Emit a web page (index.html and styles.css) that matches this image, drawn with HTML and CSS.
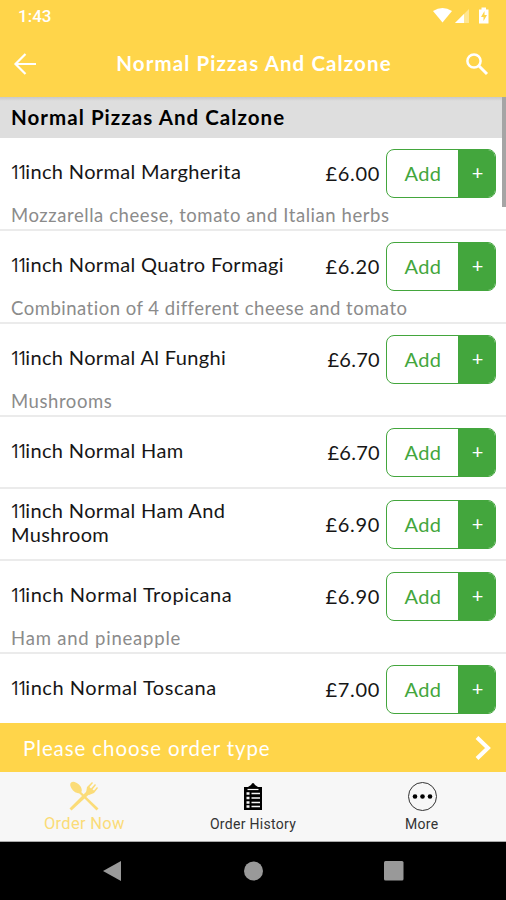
FILE: index.html
```html
<!DOCTYPE html>
<html lang="en">
<head>
<meta charset="utf-8">
<title>Order Now</title>
<link rel="stylesheet" href="styles.css">
</head>
<body>
<div class="phone">
  <header class="top">
    <div class="status">
      <span class="clock">1:43</span>
      <svg class="status-icons" width="58" height="18" viewBox="0 0 58 18">
        <path d="M0 4Q9.500 -2 19 4L9.500 15.500Z" fill="#fff"/>
        <path d="M22 16L36 2V16Z" fill="#fff" opacity=".4"/>
        <path d="M22 16L31 7V16Z" fill="#fff"/>
        <path d="M46 2.500H48.500V0.500H53V2.500H55.500V16.500H46Z" fill="#fff"/>
        <path d="M51.500 4L48 10H50.500V14L54 8H51.500Z" fill="#ffd54a"/>
      </svg>
    </div>
    <div class="bar">
      <svg width="24" height="24" viewBox="0 0 24 24" fill="none" stroke="#fff" stroke-width="2.200"><path d="M23 12H3M12.500 2L2.500 12L12.500 22"/></svg>
      <h1 class="title">Normal Pizzas And Calzone</h1>
      <svg width="24" height="24" viewBox="0 0 24 24" fill="none" stroke="#fff" stroke-width="2.500"><circle cx="9" cy="9" r="6.600"/><path d="M14 14L22 22" stroke-width="3"/></svg>
    </div>
  </header>
  <main class="menu">
    <h2 class="section">Normal Pizzas And Calzone</h2>
    <article class="item">
      <div class="line"><h3 class="name"><span class="ones">11</span>inch Normal Margherita</h3><span class="price">£6.00</span><button class="add"><span class="label">Add</span><span class="plus">+</span></button></div>
      <p class="desc">Mozzarella cheese, tomato and Italian herbs</p>
    </article>
    <article class="item">
      <div class="line"><h3 class="name"><span class="ones">11</span>inch Normal Quatro Formagi</h3><span class="price">£6.20</span><button class="add"><span class="label">Add</span><span class="plus">+</span></button></div>
      <p class="desc tight">Combination of 4 different cheese and tomato</p>
    </article>
    <article class="item">
      <div class="line"><h3 class="name"><span class="ones">11</span>inch Normal Al Funghi</h3><span class="price narrow">£6.70</span><button class="add"><span class="label">Add</span><span class="plus">+</span></button></div>
      <p class="desc">Mushrooms</p>
    </article>
    <article class="item short">
      <div class="line"><h3 class="name"><span class="ones">11</span>inch Normal Ham</h3><span class="price narrow">£6.70</span><button class="add"><span class="label">Add</span><span class="plus">+</span></button></div>
    </article>
    <article class="item short">
      <div class="line"><h3 class="name"><span class="ones">11</span>inch Normal Ham And<br>Mushroom</h3><span class="price">£6.90</span><button class="add"><span class="label">Add</span><span class="plus">+</span></button></div>
    </article>
    <article class="item low">
      <div class="line"><h3 class="name"><span class="ones">11</span>inch Normal Tropicana</h3><span class="price">£6.90</span><button class="add"><span class="label">Add</span><span class="plus">+</span></button></div>
      <p class="desc loose">Ham and pineapple</p>
    </article>
    <article class="item low">
      <div class="line"><h3 class="name"><span class="ones">11</span>inch Normal Toscana</h3><span class="price">£7.00</span><button class="add"><span class="label">Add</span><span class="plus">+</span></button></div>
    </article>
    <div class="scrollbar"></div>
  </main>
  <div class="order-type">
    <span>Please choose order type</span>
    <svg width="18" height="26" viewBox="0 0 18 26" fill="none" stroke="#fff" stroke-width="4"><path d="M3 2.500L14 13L3 23.500"/></svg>
  </div>
  <nav class="tabs">
    <a class="tab active">
      <svg width="30" height="30" viewBox="0 0 30 30" fill="#fbdc78"><ellipse cx="7" cy="6.500" rx="4.200" ry="7" transform="rotate(-45 7 6.500)"/><path d="M10 9L29.500 27.500L27.500 29.500L9 11Z"/><path d="M21 12.500L2.500 29.500L0.500 27.500L18 10Z"/><path d="M17 12L18 6L23 1L24 2L20.500 6L22 7.500L26 3L27 4L23.500 8.500L25 9.500L28 6L29 7L25 12L20 14Z"/></svg>
      <span>Order Now</span>
    </a>
    <a class="tab">
      <svg width="30" height="30" viewBox="0 0 30 30"><path d="M6 6H10L13 4Q15 0 17 4L20 6H24V29H6Z" fill="#000"/><path d="M9.500 8.500H20.500" stroke="#f7f7f7" stroke-width="1.200" fill="none"/><path d="M8.500 12.500H11.500M8.500 17H11.500M8.500 21.500H11.500M8.500 25.500H11.500" stroke="#f7f7f7" stroke-width="2.500"/><path d="M13.500 12.500H22M13.500 17H22M13.500 21.500H22M13.500 25.500H22" stroke="#f7f7f7" stroke-width="1.500"/></svg>
      <span>Order History</span>
    </a>
    <a class="tab">
      <svg width="30" height="30" viewBox="0 0 30 30"><circle cx="15.500" cy="15.500" r="14" fill="none" stroke="#333"/><circle cx="8" cy="15.500" r="2.300"/><circle cx="15.500" cy="15.500" r="2.300"/><circle cx="23" cy="15.500" r="2.300"/></svg>
      <span>More</span>
    </a>
  </nav>
  <footer class="system">
    <svg width="20" height="22" viewBox="0 0 20 22" fill="#999"><path d="M1 11L19 1V21Z"/></svg>
    <svg width="20" height="20" viewBox="0 0 20 20" fill="#999"><circle cx="10.500" cy="10" r="9.500"/></svg>
    <svg width="20" height="20" viewBox="0 0 20 20" fill="#999"><rect width="19.500" height="19.500" rx="1.500"/></svg>
  </footer>
</div>
</body>
</html>
```

FILE: styles.css
```css
* { box-sizing: border-box; }
body { margin: 0; font-family: Lato, "Liberation Sans", sans-serif; color: #161616; }
h1, h2, h3, p { margin: 0; }
.phone { width: 506px; height: 900px; display: flex; flex-direction: column; overflow: hidden; background: #fff; }
.top { height: 97px; flex: none; background: #ffd54a; color: #fff; }
.status { height: 32px; display: flex; justify-content: space-between; padding: 7px 15px 0 18px; }
.clock { font: 500 17px/18px Roboto, sans-serif; letter-spacing: 0; }
.bar { display: flex; align-items: center; justify-content: space-between; height: 63px; padding: 0 17px 0 13px; }
.title { font-size: 20.500px; line-height: 26px; font-weight: 700; letter-spacing: 1.100px; margin: 0 0 2px 6px; }
.menu { height: 626px; flex: none; position: relative; overflow: hidden; }
.section { height: 41px; padding: 0 11px; background: linear-gradient(#c9c9c9, #dedede 4px); font-size: 20.500px; line-height: 40px; font-weight: 700; letter-spacing: 1.050px; color: #000; }
.item { height: 93px; padding: 11px 10px 0 11px; border-bottom: 2px solid #ebebeb; }
.item.short { height: 72px; }
.item.low { padding-top: 11px; }
.line { display: flex; align-items: center; height: 49px; }
.name { flex: 1; font-size: 20px; line-height: 24.500px; font-weight: 400; letter-spacing: .35px; padding-bottom: 5px; white-space: nowrap; }
.low .name { letter-spacing: .55px; }
.ones { font-family: "Open Sans", sans-serif; font-size: 19.500px; line-height: 1; letter-spacing: -4px; margin-right: 1px; margin-left: -1px; }
.price { font-size: 20px; letter-spacing: .7px; margin-right: 6px; padding-bottom: 2px; }
.price.narrow { letter-spacing: .3px; }
.add { display: flex; width: 110px; height: 49px; padding: 0; border: 1.500px solid #43a63d; border-radius: 8px; background: #fff; overflow: hidden; font: 400 20px/46px Lato, sans-serif; color: #43a63d; }
.label { flex: 1; letter-spacing: .4px; padding-left: 1px; }
.plus { width: 37px; padding-left: 2px; line-height: 45px; background: #43a63d; color: #fff; }
.desc { font-size: 18.500px; line-height: 24px; color: #8b8b8b; letter-spacing: .57px; margin-top: 5px; white-space: nowrap; }
.desc.tight { letter-spacing: .5px; }
.desc.loose { letter-spacing: .8px; }
.scrollbar { position: absolute; top: 0; right: 0; width: 4px; height: 110px; background: #a5a5a5; }
.order-type { height: 49px; flex: none; display: flex; align-items: center; justify-content: space-between; padding: 0 14px 0 23px; background: #ffd54a; color: #fff; font-size: 20.500px; letter-spacing: .9px; }
.tabs { height: 70px; flex: none; display: grid; grid-template-columns: repeat(3, 1fr); background: #f7f7f7; border-bottom: 1px solid #aaa; }
.tab { display: flex; flex-direction: column; align-items: center; padding-top: 9px; font: 400 14px/22px Roboto, sans-serif; color: #333; gap: 2px; }
.tab span { letter-spacing: .3px; }
.tab.active { color: #fbdc78; font-size: 16.500px; }
.system { flex: 1; background: #000; display: flex; justify-content: space-between; align-items: center; padding: 0 102px; }
```
